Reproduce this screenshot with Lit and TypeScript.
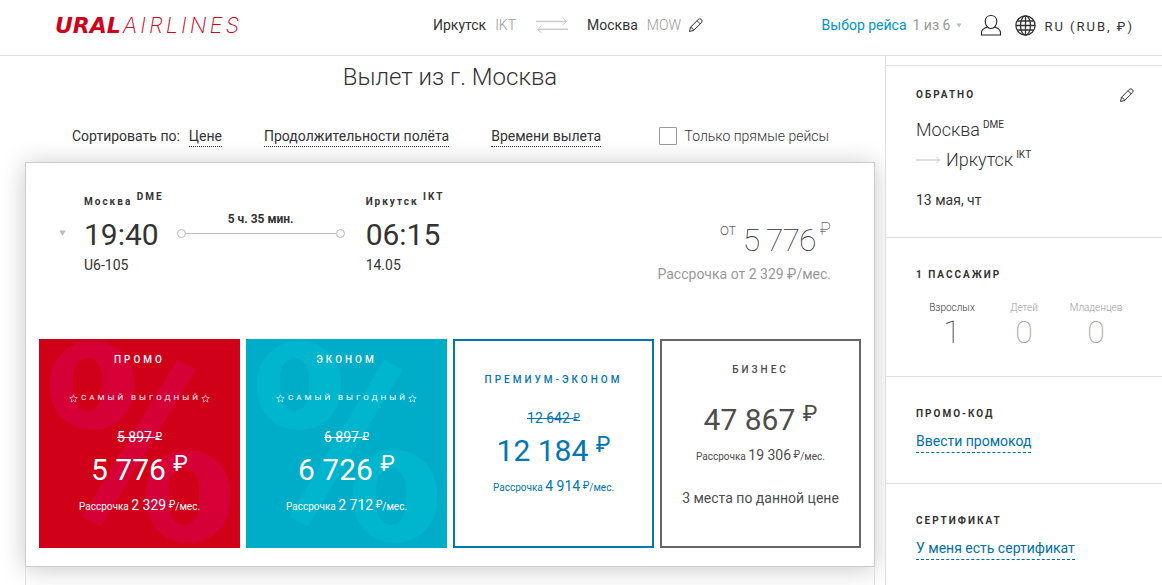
import { LitElement, html, css, svg, nothing } from "lit";
import { customElement, property } from "lit/decorators.js";

interface Fare {
  kind: "promo" | "econom" | "premium" | "business";
  title: string;
  tag?: string;
  oldPrice?: string;
  price: string;
  monthly: string;
  seats?: string;
}

const FARES: Fare[] = [
  { kind: "promo", title: "Промо", tag: "Самый выгодный", oldPrice: "5 897", price: "5 776", monthly: "2 329" },
  { kind: "econom", title: "Эконом", tag: "Самый выгодный", oldPrice: "6 897", price: "6 726", monthly: "2 712" },
  { kind: "premium", title: "Премиум-эконом", oldPrice: "12 642", price: "12 184", monthly: "4 914" },
  { kind: "business", title: "Бизнес", price: "47 867", monthly: "19 306", seats: "3 места по данной цене" },
];

const pencil = html`<svg class="pencil" width="16" height="16" viewBox="0 0 16 16" fill="none" stroke="currentColor" stroke-width="1" stroke-linejoin="round" aria-hidden="true">
  <path d="M1.500 14.500l.9-4.100L10.300 2.400q1.500-1.500 3.100.1q1.600 1.600.1 3.100L5.600 13.500z"/>
  <path d="M9 3.700l3.200 3.200M2.400 10.400q2.700.4 3.200 3.100"/>
</svg>`;

const starPath = svg`<path d="M4.500.8l1.100 2.600 2.700.2-2.100 1.800.7 2.700-2.400-1.500-2.400 1.500.7-2.700L.7 3.600l2.700-.2z" fill="none" stroke="currentColor" stroke-width=".6"/>`;
const star = html`<svg width="9" height="9" viewBox="0 0 9 9" aria-hidden="true">${starPath}</svg>`;

const discountPattern = html`<svg class="pattern" width="201" height="209" viewBox="0 0 201 209" aria-hidden="true">
  <rect class="ink" x="11" y="2" width="84" height="89" rx="41" ry="41"/>
  <rect class="hole" x="34" y="19" width="29" height="53" rx="14.500" ry="19"/>
  <rect class="ink" x="107" y="111" width="84" height="93" rx="41" ry="42"/>
  <rect class="hole" x="130" y="129" width="30" height="57" rx="15" ry="20"/>
  <path class="ink" d="M138 21l19 9.500L62 187l-19-9z"/>
</svg>`;

@customElement("fare-card")
class FareCard extends LitElement {
  @property({ attribute: false }) fare!: Fare;

  static styles = css`
    :host { display: grid; min-width: 0; }
    .fare {
      position: relative;
      display: flex;
      flex-direction: column;
      align-items: center;
      box-sizing: border-box;
      min-height: 209px;
      padding: 9px 0 28px;
      border: 2px solid;
      background: #fff;
      font: 400 14px/20px Roboto, "Liberation Sans", sans-serif;
      white-space: nowrap;
      cursor: pointer;
    }
    .promo { background: #cf0018; border-color: #cf0018; color: #fff; }
    .econom { background: #00adc8; border-color: #00adc8; color: #fff; }
    .premium { border-color: #0076b3; color: #0076b3; padding-top: 29px; }
    .business { border-color: #666; color: #4d4d4d; padding-top: 19px; }
    .pattern { position: absolute; left: -2px; top: -2px; }
    .promo .ink { fill: #d60037; }
    .promo .hole { fill: #cf0018; }
    .econom .ink { fill: #00b5ce; }
    .econom .hole { fill: #00adc8; }
    .row { position: relative; }
    .title { font-size: 10px; font-weight: 500; letter-spacing: 3px; text-transform: uppercase; margin-bottom: 18px; }
    .business .title { margin-bottom: 20px; }
    .tag {
      display: flex; align-items: center;
      font-size: 8px; letter-spacing: 3px; text-transform: uppercase; margin-bottom: 19px;
    }
    .tag-text { margin-left: 3px; }
    .old { text-decoration: line-through; margin-bottom: 3px; }
    .price { font-size: 30px; line-height: 40px; margin-bottom: 5px; }
    .monthly { font-size: 10px; }
    .amount { font-size: 14px; }
    .rub { line-height: 0; vertical-align: 2px; font-size: 10px; }
    .price .rub { font-size: 22px; vertical-align: 9px; }
    .seats { margin-top: 21px; }
  `;

  render() {
    const f = this.fare;
    return html`<button class="fare ${f.kind}" type="button">
      ${f.tag ? discountPattern : nothing}
      <span class="row title">${f.title}</span>
      ${f.tag ? html`<span class="row tag">${star}<span class="tag-text">${f.tag}</span>${star}</span>` : nothing}
      ${f.oldPrice ? html`<s class="row old">${f.oldPrice} <span class="rub">₽</span></s>` : nothing}
      <span class="row price">${f.price} <span class="rub">₽</span></span>
      <span class="row monthly">Рассрочка <span class="amount">${f.monthly}</span> <span class="rub">₽</span>/мес.</span>
      ${f.seats ? html`<span class="row seats">${f.seats}</span>` : nothing}
    </button>`;
  }
}

@customElement("app-root")
class AppRoot extends LitElement {
  static styles = css`
    :host {
      display: flex;
      flex-direction: column;
      min-height: 100vh;
      color: #333;
      background: #fff;
      font: 400 14px/20px Roboto, "Liberation Sans", sans-serif;
    }
    * { box-sizing: border-box; }
    h1, h2, p { margin: 0; }
    button { font: inherit; color: inherit; background: none; border: 0; padding: 0; cursor: pointer; }
    a { text-decoration: none; }
    svg { display: block; flex: none; }

    .header {
      display: flex;
      align-items: center;
      height: 56px;
      padding: 0 28px 5px 55px;
      border-bottom: 1px solid #e0e0e0;
      white-space: nowrap;
    }
    .logo { flex: 0 0 378px; display: flex; align-items: baseline; color: #d0021b; font: italic 700 22px/24px "DejaVu Sans", sans-serif; }
    .logo-thin { font-family: Inter, sans-serif; font-weight: 200; letter-spacing: 3px; margin-left: 2px; }
    .route { display: flex; align-items: center; }
    .code { color: #999; font-weight: 300; margin-left: 9px; }
    .swap { margin: 0 19px 0 20px; color: #ccc; }
    .header .pencil { margin-left: 7px; }
    .step { display: flex; align-items: center; margin-left: auto; color: #999; }
    .step-name { color: #0095c8; margin-right: 6px; }
    .caret { margin-left: 6px; color: #bbb; }
    .user { margin-left: 18px; color: #222; }
    .lang { display: flex; align-items: center; margin-left: 13px; font-size: 13px; letter-spacing: 2px; }
    .lang-name { padding-top: 3px; }
    .globe { margin-right: 8px; }

    .body { flex: 1; display: grid; grid-template-columns: minmax(0, 1fr) 277px; }
    .main { display: flex; flex-direction: column; padding: 0 10px 0 25px; }
    .heading { font-size: 24px; line-height: 32px; font-weight: 300; text-align: center; padding: 5px 0 32px; }
    .sort { display: flex; align-items: center; padding: 0 46px 15px 47px; height: 37px; }
    .sort-label { margin-right: 9px; }
    .sort-by { border-bottom: 1px dotted #333; margin-right: 42px; }
    .direct { display: flex; align-items: center; margin-left: auto; font-weight: 300; }
    .check { appearance: none; width: 18px; height: 18px; margin: 0 8px 0 0; border: 1px solid #999; border-radius: 1px; background: #fff; }

    .card { border: 1px solid #ccc; background: #fff; box-shadow: 0 2px 24px rgba(0, 0, 0, .22); padding: 29px 13px 18px; }
    .next { flex: 1; border: 1px solid #e0e0e0; border-width: 0 1px; }
    .flight { display: grid; grid-template-columns: 25px auto 172px auto 1fr; padding: 0 30px 0 20px; min-height: 147px; align-items: start; }
    .expand { padding-top: 38px; color: #bbb; }
    .place { font-size: 10px; line-height: 20px; font-weight: 700; letter-spacing: 2px; }
    .airport { line-height: 0; vertical-align: 5px; }
    .time { font-size: 30px; line-height: 36px; margin: 5px 0 2px; }
    .leg { padding: 18px 4px 0 0; }
    .duration { font-size: 12px; line-height: 18px; font-weight: 700; text-align: center; }
    .track { display: flex; align-items: center; margin-top: 1px; }
    .dot { width: 9px; height: 9px; border: 1px solid #bbb; border-radius: 50%; }
    .bar { flex: 1; height: 1px; background: #bbb; }
    .depart { padding-right: 13px; }
    .arrive { padding-left: 17px; }
    .total { text-align: right; padding-top: 28px; white-space: nowrap; }
    .sum { font-size: 32px; line-height: 40px; font-weight: 100; letter-spacing: -1px; }
    .from { font-size: 16px; line-height: 0; vertical-align: 16px; font-weight: 200; letter-spacing: 0; }
    .rub { font-size: 18px; line-height: 0; vertical-align: 16px; letter-spacing: 0; }
    .loan { color: #999; margin-top: 4px; }
    .fares { display: grid; grid-template-columns: repeat(4, 1fr); gap: 6px; }

    .side { position: relative; background: #fff; border-left: 1px solid #e0e0e0; padding-top: 9px; }
    .block { border-top: 1px solid #e0e0e0; padding: 31px 30px 30px; }
    .back { padding: 23px 27px 27px 30px; }
    .people { padding: 31px 30px 25px; }
    .cap { font-size: 10px; line-height: 12px; font-weight: 700; letter-spacing: 2px; text-transform: uppercase; }
    .cap-row { display: flex; justify-content: space-between; align-items: center; margin-bottom: 14px; height: 12px; }
    .city { display: flex; align-items: center; font-size: 18px; line-height: 30px; font-weight: 300; }
    .iata { font-size: 10px; font-weight: 400; line-height: 12px; margin: 0 0 10px 3px; }
    .arrow { margin-right: 5px; color: #ccc; }
    .date { margin-top: 15px; }
    .pax { display: grid; grid-template-columns: repeat(3, 72px); text-align: center; margin-top: 21px; color: #999; font-size: 10px; font-weight: 300; line-height: 12px; }
    .count { font-size: 32px; line-height: 37px; font-weight: 100; }
    .adult { color: #333; }
    .dash { display: inline-block; margin-top: 11px; color: #006fa6; border-bottom: 1px dashed #006fa6; line-height: 21px; }
  `;

  render() {
    return html`
      <header class="header">
        <a class="logo" href="#" aria-label="Ural Airlines"><span>URAL</span><span class="logo-thin">AIRLINES</span></a>
        <div class="route">
          <span>Иркутск</span><span class="code">IKT</span>
          <svg class="swap" width="32" height="16" viewBox="0 0 32 16" fill="none" stroke="currentColor" aria-hidden="true">
            <path stroke-width="1.500" d="M0 4.500h30M2 12.300h30"/><path d="M26.500.8l4 3.700-4 3.700M5.500 8.600l-4 3.700 4 3.700"/>
          </svg>
          <span>Москва</span><span class="code">MOW</span>
          <button type="button" aria-label="Изменить маршрут">${pencil}</button>
        </div>
        <div class="step">
          <span class="step-name">Выбор рейса</span><span>1 из 6</span>
          <svg class="caret" width="6" height="5" viewBox="0 0 6 5" aria-hidden="true"><path d="M.5.500h5L3 4.500z" fill="currentColor"/></svg>
        </div>
        <button class="user" type="button" aria-label="Профиль">
          <svg width="22" height="22" viewBox="0 0 22 22" fill="none" stroke="currentColor" stroke-width="1.100" aria-hidden="true">
            <path d="M11 1.500c3.400 0 5.800 2.500 5.800 6 0 3.800-2.500 7-5.800 7s-5.800-3.200-5.800-7c0-3.500 2.400-6 5.800-6z"/>
            <path d="M7.500 13.300C4 14 1.500 16 1.500 18.800v2.200h19v-2.200c0-2.800-2.500-4.800-6-5.500"/>
          </svg>
        </button>
        <button class="lang" type="button">
          <svg class="globe" width="21" height="21" viewBox="0 0 21 21" fill="none" stroke="currentColor" stroke-width="1.300" aria-hidden="true">
            <circle cx="10.500" cy="10.500" r="9.600"/><ellipse cx="10.500" cy="10.500" rx="5" ry="9.600"/>
            <path d="M10.500 1v19M1 10.500h19M2.300 6h16.400M2.300 15h16.400"/>
          </svg>
          <span class="lang-name">RU (RUB, ₽)</span>
        </button>
      </header>
      <div class="body">
        <main class="main">
          <h1 class="heading">Вылет из г. Москва</h1>
          <div class="sort">
            <span class="sort-label">Сортировать по:</span>
            <button class="sort-by" type="button">Цене</button>
            <button class="sort-by" type="button">Продолжительности полёта</button>
            <button class="sort-by" type="button">Времени вылета</button>
            <label class="direct"><input class="check" type="checkbox" />Только прямые рейсы</label>
          </div>
          <article class="card">
            <div class="flight">
              <div class="expand"><svg width="7" height="6" viewBox="0 0 7 6" aria-hidden="true"><path d="M.3.500h6.400L3.500 5.700z" fill="currentColor"/></svg></div>
              <div class="depart">
                <div class="place">Москва <span class="airport">DME</span></div>
                <div class="time">19:40</div>
                <div>U6-105</div>
              </div>
              <div class="leg">
                <div class="duration">5 ч. 35 мин.</div>
                <div class="track"><span class="dot"></span><span class="bar"></span><span class="dot"></span></div>
              </div>
              <div class="arrive">
                <div class="place">Иркутск <span class="airport">IKT</span></div>
                <div class="time">06:15</div>
                <div>14.05</div>
              </div>
              <div class="total">
                <div class="sum"><span class="from">от</span> 5 776<span class="rub"> ₽</span></div>
                <div class="loan">Рассрочка от 2 329 ₽/мес.</div>
              </div>
            </div>
            <div class="fares">${FARES.map((f) => html`<fare-card .fare=${f}></fare-card>`)}</div>
          </article>
          <div class="next"></div>
        </main>
        <aside class="side">
          <section class="block back">
            <div class="cap-row"><h2 class="cap">Обратно</h2><button type="button" aria-label="Изменить дату">${pencil}</button></div>
            <div class="city">Москва<span class="iata">DME</span></div>
            <div class="city">
              <svg class="arrow" width="25" height="8" viewBox="0 0 25 8" fill="none" stroke="currentColor" aria-hidden="true"><path stroke-width="1.300" d="M0 4h23.500"/><path d="M20.500 1l3 3-3 3"/></svg>
              Иркутск<span class="iata">IKT</span>
            </div>
            <p class="date">13 мая, чт</p>
          </section>
          <section class="block people">
            <h2 class="cap">1 пассажир</h2>
            <div class="pax">
              <div class="adult">Взрослых<div class="count">1</div></div>
              <div>Детей<div class="count">0</div></div>
              <div>Младенцев<div class="count">0</div></div>
            </div>
          </section>
          <section class="block">
            <h2 class="cap">Промо-код</h2>
            <a class="dash" href="#">Ввести промокод</a>
          </section>
          <section class="block">
            <h2 class="cap">Сертификат</h2>
            <a class="dash" href="#">У меня есть сертификат</a>
          </section>
        </aside>
      </div>
    `;
  }
}
